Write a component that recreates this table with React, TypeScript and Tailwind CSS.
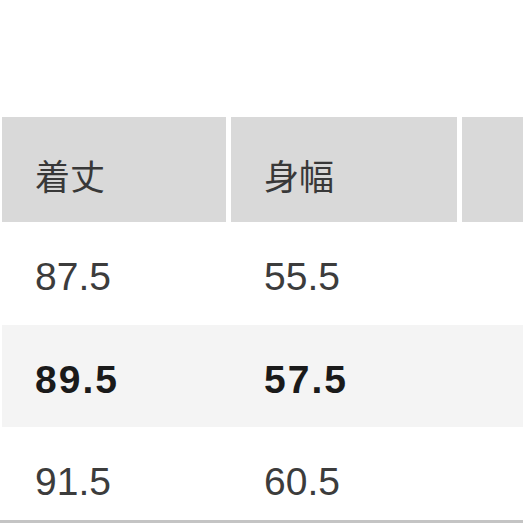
const headers = ['着丈', '身幅', '']

const rows = [
  { values: ['87.5', '55.5', ''], bold: false, shade: false, height: 'h-[103px]', pad: 'pt-[6px]' },
  { values: ['89.5', '57.5', ''], bold: true, shade: true, height: 'h-[102px]', pad: 'pt-[6px]' },
  { values: ['91.5', '60.5', ''], bold: false, shade: false, height: 'h-[93px]', pad: 'pt-[16px]' },
]

export default function App() {
  return (
    <div className="w-[523px] h-[523px] overflow-hidden bg-white text-[#333]">
      <div className="pt-[117px] pl-[2px]">
        <div className="grid grid-cols-[224px_226px_1fr] gap-x-[5px] h-[105px]">
          {headers.map((label, i) => (
            <div
              key={i}
              className="bg-[#d9d9d9] flex items-center pl-[33px] pt-[10px] text-[35px] leading-none text-[#383838] font-['Noto_Sans_CJK_JP','Noto_Sans',sans-serif]"
            >
              {label}
            </div>
          ))}
        </div>

        {rows.map((row, r) => (
          <div
            key={r}
            className={`grid grid-cols-[229px_231px_1fr] ${row.height} ${row.pad} ${row.shade ? 'bg-[#f4f4f4]' : 'bg-white'}`}
          >
            {row.values.map((v, i) => (
              <div
                key={i}
                className={`flex items-center pl-[33px] text-[39px] leading-none font-['Liberation_Sans',Arial,sans-serif] ${
                  row.bold ? 'font-bold tracking-[2px] text-[#1a1a1a]' : 'text-[#3c3c3c]'
                }`}
              >
                {v}
              </div>
            ))}
          </div>
        ))}
        <div className="h-[3px] bg-[#c4c4c4] -ml-[2px]" />
      </div>
    </div>
  )
}
